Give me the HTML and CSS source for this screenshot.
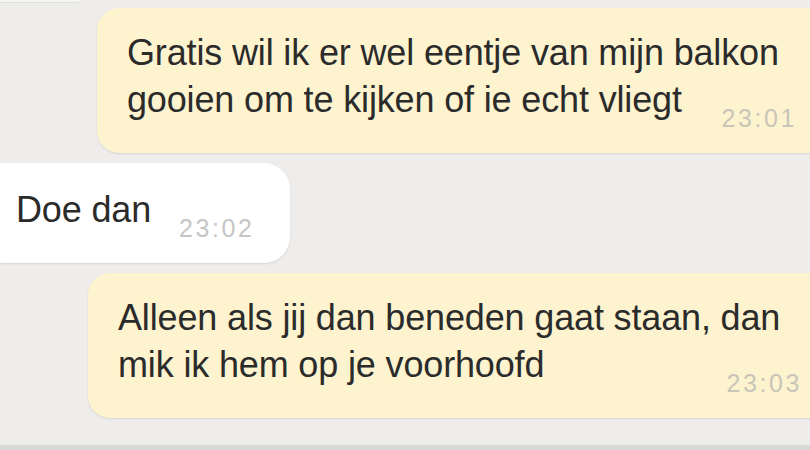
FILE: index.html
```html
<!DOCTYPE html>
<html lang="nl">
<head>
<meta charset="utf-8">
<title>Chat</title>
<link rel="stylesheet" href="styles.css">
</head>
<body>
<div class="screen">
  <div class="stub"></div>
  <div class="chat">
    <div class="bubble out first">
      <p class="line">Gratis wil ik er wel eentje van mijn balkon</p>
      <div class="last">
        <p class="line">gooien om te kijken of ie echt vliegt</p>
        <span class="time">23:01</span>
      </div>
    </div>
    <div class="bubble in">
      <div class="last">
        <p class="line">Doe dan</p>
        <span class="time">23:02</span>
      </div>
    </div>
    <div class="bubble out second">
      <p class="line">Alleen als jij dan beneden gaat staan, dan</p>
      <div class="last">
        <p class="line">mik ik hem op je voorhoofd</p>
        <span class="time">23:03</span>
      </div>
    </div>
  </div>
  <div class="band"></div>
</div>
</body>
</html>
```
FILE: styles.css
```css
html, body {
  margin: 0;
  padding: 0;
}
body {
  background: #eeedeb;
  font-family: "Liberation Sans", Arial, sans-serif;
  overflow: hidden;
}
.screen {
  width: 810px;
  height: 450px;
  display: flex;
  flex-direction: column;
  overflow: hidden;
}
.stub {
  width: 80px;
  height: 2px;
  background: #f4f4f3;
  border-bottom: 1px solid #dedddb;
  border-bottom-right-radius: 6px;
  flex: none;
}
.chat {
  display: flex;
  flex-direction: column;
  gap: 10px;
  padding-top: 5px;
}
.bubble {
  color: #2b2b2b;
  font-size: 36px;
  line-height: 47px;
  letter-spacing: -0.15px;
  box-shadow: 0 1px 2px rgba(0, 0, 0, 0.10);
}
.line {
  margin: 0;
  white-space: nowrap;
}
.last {
  display: flex;
  align-items: flex-end;
  justify-content: space-between;
  gap: 28px;
}
.last > .line {
  margin-bottom: 8px;
}
.time {
  font-size: 25px;
  line-height: 25px;
  letter-spacing: 2.6px;
  color: #c9c5b8;
  white-space: nowrap;
}
.out {
  background: #fdf3cf;
  border-radius: 22px 0 0 22px;
  margin-right: -20px;
  padding: 21px 0 22px 30px;
}
.first {
  margin-left: 97px;
  padding-right: 33px;
}
.second {
  margin-left: 88px;
  padding-right: 28px;
}
.in {
  align-self: flex-start;
  background: #ffffff;
  border-radius: 0 26px 26px 0;
  padding: 23px 35px 22px 16px;
}
.in .time {
  color: #c6c6c6;
}
.band {
  margin-top: auto;
  height: 5px;
  background: #d9d9d8;
  flex: none;
}
```
